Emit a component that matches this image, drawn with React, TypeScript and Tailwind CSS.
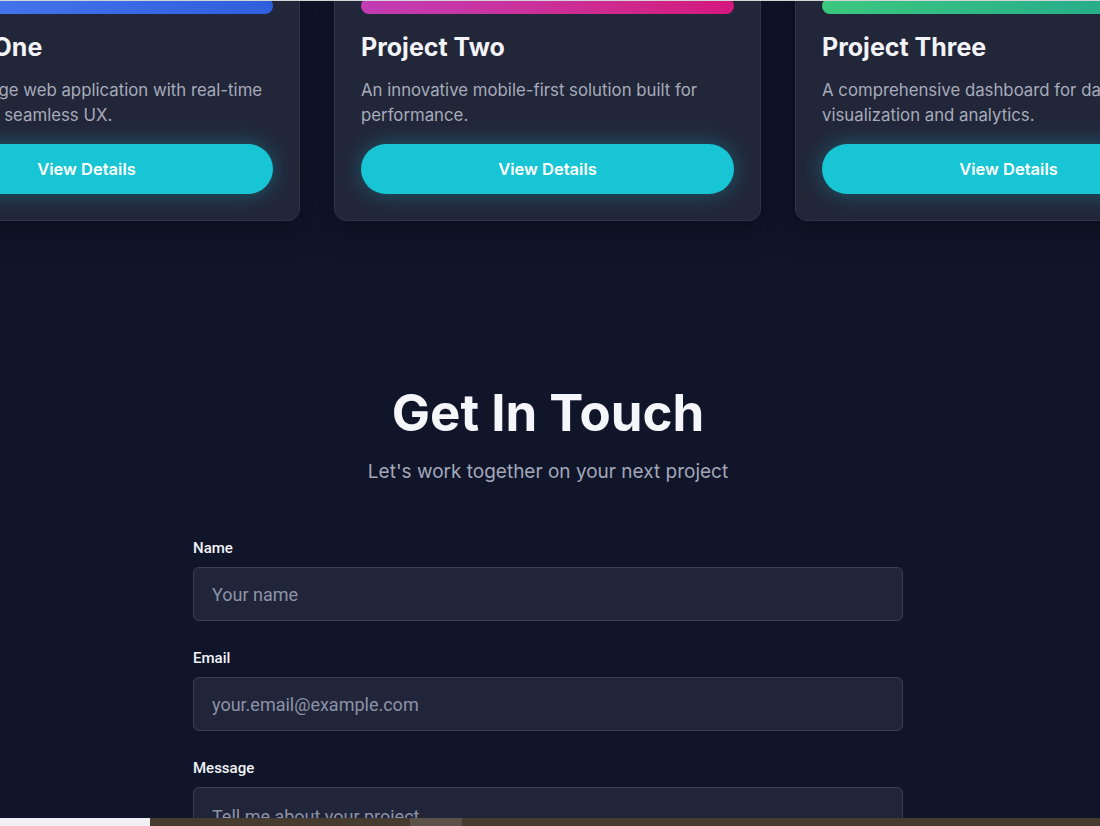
import React from "react";

const cards = [
  {
    title: "Project One",
    desc: "A cutting-edge web application with real-time features and seamless UX.",
    bar: "bg-gradient-to-r from-[#4a7bf0] to-[#2f5fdc]",
  },
  {
    title: "Project Two",
    desc: "An innovative mobile-first solution built for performance.",
    bar: "bg-gradient-to-r from-[#c23cb4] to-[#d4177c]",
  },
  {
    title: "Project Three",
    desc: "A comprehensive dashboard for data visualization and analytics.",
    bar: "bg-gradient-to-r from-[#3cc77f] to-[#1fa58c]",
  },
];

function Card({ title, desc, bar }: { title: string; desc: string; bar: string }) {
  return (
    <div className="w-[427px] shrink-0 rounded-xl border border-[#2e3347] bg-[#222639] px-[26px] pt-[26px] pb-[26px] shadow-[0_10px_30px_rgba(0,0,0,0.35)]">
      <div className={`h-[16px] rounded-lg ${bar}`} />
      <h3 className="mt-[17px] text-[25px] font-bold leading-[32px] text-[#f3f4f8]">{title}</h3>
      <p className="mt-[15px] text-[16.8px] leading-[25px] text-[#a7abbb]">{desc}</p>
      <button className="mt-[16px] flex h-[50px] w-full items-center justify-center rounded-full bg-[#17c5d4] text-[16.5px] font-semibold text-white shadow-[0_0_22px_rgba(23,197,212,0.35)]">
        View Details
      </button>
    </div>
  );
}

function Field({ label, placeholder, tall }: { label: string; placeholder: string; tall?: boolean }) {
  return (
    <div className="flex flex-col">
      <label className="text-[15px] font-medium leading-[20px] text-[#f2f3f7]" style={{ fontFamily: "Roboto, sans-serif" }}>
        {label}
      </label>
      {tall ? (
        <textarea
          placeholder={placeholder}
          className="mt-[9px] h-[140px] resize-none rounded-md border border-[#3a4058] bg-[#20253a] px-[18px] py-[15px] text-[18px] text-white outline-none placeholder:text-[#8d93a6]"
          style={{ fontFamily: "Roboto, sans-serif" }}
        />
      ) : (
        <input
          placeholder={placeholder}
          className="mt-[9px] h-[54px] rounded-md border border-[#3a4058] bg-[#20253a] px-[18px] text-[18px] text-white outline-none placeholder:text-[#8d93a6]"
          style={{ fontFamily: "Roboto, sans-serif" }}
        />
      )}
    </div>
  );
}

export default function App() {
  return (
    <div className="relative h-[826px] overflow-hidden bg-[#10152a] pr-1" style={{ fontFamily: "Inter, 'Noto Sans', sans-serif" }}>
      <div className="mt-[-29px] ml-[-127px] flex gap-[34px]">
        {cards.map((c) => (
          <Card key={c.title} {...c} />
        ))}
      </div>

      <section className="mt-[167px] flex flex-col items-center">
        <h2 className="text-[51px] font-bold leading-[50px] text-[#f5f6fa]">Get In Touch</h2>
        <p className="mt-[20px] text-[19px] leading-[28px] text-[#a3a8b9]">Let's work together on your next project</p>

        <form className="mt-[52px] flex w-[710px] flex-col gap-[27px]">
          <Field label="Name" placeholder="Your name" />
          <Field label="Email" placeholder="your.email@example.com" />
          <Field label="Message" placeholder="Tell me about your project" tall />
        </form>
      </section>

      <div className="absolute left-0 right-0 top-0 h-[1px] bg-[#d4d4d8]" />
      <div className="absolute bottom-0 left-0 right-0 flex h-[8px]">
        <div className="w-[150px] bg-[#f1eff3]" />
        <div className="w-[260px] bg-[#463b2f]" />
        <div className="w-[52px] bg-[#5c5248]" />
        <div className="flex-1 bg-[#463b2f]" />
      </div>
    </div>
  );
}
